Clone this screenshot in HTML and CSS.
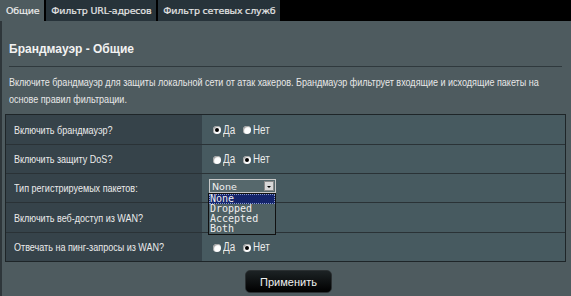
FILE: index.html
```html
<!DOCTYPE html>
<html lang="ru">
<head>
    <meta charset="UTF-8">
    <title>Брандмауэр - Общие</title>
    <link rel="stylesheet" href="styles.css">
</head>
<body>
<div class="tabs">
    <div class="tab active">Общие</div>
    <div class="tab">Фильтр URL-адресов</div>
    <div class="tab">Фильтр сетевых служб</div>
</div>

<div class="panel">
    <h2 class="panel-title">Брандмауэр - Общие</h2>
    <div class="divider"></div>
    <p class="desc">Включите брандмауэр для защиты локальной сети от атак хакеров. Брандмауэр фильтрует входящие и исходящие пакеты на основе правил фильтрации.</p>

    <div class="settings-table">
        <div class="row">
            <div class="cell-label"><span class="narrow">Включить брандмауэр?</span></div>
            <div class="cell-value">
                <span class="radio checked"></span><span class="radio-text narrow">Да</span>
                <span class="radio"></span><span class="radio-text narrow">Нет</span>
            </div>
        </div>
        <div class="row short">
            <div class="cell-label"><span class="narrow">Включить защиту DoS?</span></div>
            <div class="cell-value">
                <span class="radio"></span><span class="radio-text narrow">Да</span>
                <span class="radio checked"></span><span class="radio-text narrow">Нет</span>
            </div>
        </div>
        <div class="row short">
            <div class="cell-label"><span class="narrow">Тип регистрируемых пакетов:</span></div>
            <div class="cell-value">
                <div class="select-wrap">
                    <div class="select">
                        <span class="select-text">None</span>
                        <span class="select-btn"></span>
                    </div>
                    <!-- открытый список -->
                    <ul class="select-list">
                        <li class="selected">None</li>
                        <li>Dropped</li>
                        <li>Accepted</li>
                        <li>Both</li>
                    </ul>
                </div>
            </div>
        </div>
        <div class="row">
            <div class="cell-label"><span class="narrow">Включить веб-доступ из WAN?</span></div>
            <div class="cell-value"></div>
        </div>
        <div class="row short last">
            <div class="cell-label"><span class="narrow">Отвечать на пинг-запросы из WAN?</span></div>
            <div class="cell-value">
                <span class="radio"></span><span class="radio-text narrow">Да</span>
                <span class="radio checked"></span><span class="radio-text narrow">Нет</span>
            </div>
        </div>
    </div>

    <div class="footer">
        <button class="apply-btn">Применить</button>
    </div>
</div>
</body>
</html>
```

FILE: styles.css
```css
:root {
    --panel-bg: #4e5b5f;
    --label-bg: #36434a;
    --value-bg: #475a60;
    --line: #2a3236;
    --text: #ebebeb;
}

body {
    margin: 0;
    padding: 0;
    width: 571px;
    height: 296px;
    overflow: hidden;
    background: var(--panel-bg);
    font-family: "Liberation Sans", Arial, sans-serif;
    color: var(--text);
}

/* узкий шрифт (Arial Narrow) недоступен - сжимаем обычный */
.narrow {
    display: inline-block;
    white-space: nowrap;
    transform: scaleX(0.82);
    transform-origin: left center;
}

/* ========== вкладки ========== */
.tabs {
    display: flex;
    height: 21px;
    background: #000;
    gap: 2px;
}
.tab {
    display: flex;
    align-items: center;
    padding: 0 5px 1px;
    background: #27333a;
    color: #e6e6e6;
    font-family: "DejaVu Sans", sans-serif;
    font-size: 9.5px;
    letter-spacing: -0.2px;
    -webkit-text-stroke: 0.2px #e6e6e6;
}
.tab.active {
    padding: 0 5px 1px 6px;
    background: var(--panel-bg);
    color: #f0f0f0;
}

/* ========== панель ========== */
.panel {
    height: 275px;
    border-left: 2px solid #2e363a;
    padding: 0 5px 0 7px;
}
.panel-title {
    margin: 0;
    padding-top: 20px;
    font-size: 12px;
    font-weight: bold;
    line-height: 16px;
    color: #f2f2f2;
}
.divider {
    height: 1px;
    margin: 9px 4px 0 0;
    background: #2f393d;
}
.desc {
    width: 658px;
    margin: 7px 0 0;
    font-size: 11px;
    line-height: 17px;
    color: #e8e8e8;
    transform: scaleX(0.82);
    transform-origin: left top;
}

/* ========== таблица ========== */
.settings-table {
    margin: 6px 0 0 -4px;
    border: 1px solid #1e2528;
}
.row {
    display: flex;
    height: 29px;
    border-bottom: 1px solid var(--line);
}
.row.short {
    height: 28px;
}
.row.last {
    border-bottom: none;
}
.cell-label {
    width: 188px;
    padding-left: 8px;
    display: flex;
    align-items: center;
    background: var(--label-bg);
    font-size: 11px;
}
.cell-value {
    flex: 1;
    display: flex;
    align-items: center;
    padding-left: 11px;
    background: var(--value-bg);
    font-size: 12px;
}

/* --- радио --- */
.radio {
    position: relative;
    width: 8px;
    height: 8px;
    border-radius: 50%;
    background: #fff;
    box-shadow: inset 1px 1px 1px #999;
    margin-right: 2px;
    margin-top: 1px;
}
.radio.checked:after {
    content: "";
    position: absolute;
    left: 2px;
    top: 2px;
    width: 4px;
    height: 4px;
    border-radius: 50%;
    background: #000;
}
.radio-text {
    margin-right: 5px;
}

/* --- выпадающий список --- */
.select-wrap {
    position: relative;
    margin: -4px 0 0 -4px;
}
.select {
    display: flex;
    align-items: center;
    justify-content: space-between;
    width: 65px;
    height: 12px;
    border: 1px solid #c8c8c8;
    background: #56686c;
    font-family: "DejaVu Sans", sans-serif;
    font-size: 9.5px;
    color: #f0f0f0;
}
.select-text {
    padding-left: 2px;
}
.select-btn {
    position: relative;
    width: 10px;
    height: 10px;
    margin-right: 1px;
    background: #d8d8d8;
    border: 1px solid #8a8a8a;
    box-sizing: border-box;
}
.select-btn:after {
    content: "";
    position: absolute;
    left: 2px;
    top: 4px;
    border-left: 2px solid transparent;
    border-right: 2px solid transparent;
    border-top: 2px solid #000;
}
.select-list {
    position: absolute;
    left: -1px;
    top: 14px;
    width: 66px;
    margin: 0;
    padding: 0;
    list-style: none;
    border: 1px solid #111;
    background: #4e6064;
    font-family: "DejaVu Sans Mono", monospace;
    font-size: 10px;
    line-height: 10px;
    color: #eee;
}
.select-list li {
    padding-left: 1px;
}
.select-list li.selected {
    background: #14246b;
    outline: 1px dotted #8899cc;
    outline-offset: -1px;
}

/* --- кнопка --- */
.footer {
    display: flex;
    justify-content: center;
    margin-top: 8px;
}
.apply-btn {
    width: 87px;
    height: 23px;
    border: 1px solid #2a2f31;
    border-radius: 5px;
    background: linear-gradient(#1c2224, #000);
    color: #f0f0f0;
    font-family: "Liberation Sans", Arial, sans-serif;
    font-size: 11px;
    margin-left: 2px;
}
```
